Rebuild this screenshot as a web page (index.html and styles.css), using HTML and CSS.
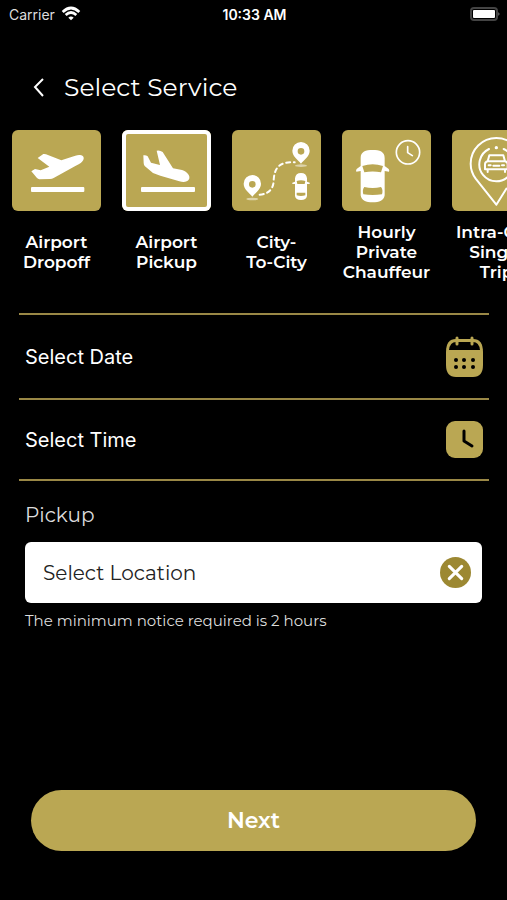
FILE: index.html
```html
<!doctype html>
<html lang="en">
  <head>
    <meta charset="utf-8">
    <meta name="viewport" content="width=device-width, initial-scale=1">
    <title>Select Service</title>
    <link rel="stylesheet" href="styles.css">
  </head>
  <body>
    <div class="status-bar">
      <div class="carrier">
        <span>Carrier</span>
        <svg width="20" height="16" viewBox="0 0 60 48" fill="none" stroke="#fff" stroke-width="8">
          <path d="M5 18Q30-6 55 18M14 27Q30 12 46 27" />
          <path d="M22 35Q30 28 38 35L30 43Z" fill="#fff" stroke="none" />
        </svg>
      </div>
      <time>10:33 AM</time>
      <div class="battery">
        <svg width="30" height="14" viewBox="0 0 30 14">
          <rect x="1" y="1" width="26" height="12" rx="3" fill="none" stroke="#444" stroke-width="2" />
          <rect x="3" y="3" width="22" height="8" rx="1" fill="#fff" />
          <path d="M28 5l2 2-2 2z" fill="#555" />
        </svg>
      </div>
    </div>

    <header class="title-bar">
      <button type="button" class="back" aria-label="Back">
        <svg width="12" height="20" viewBox="0 0 12 20" fill="none" stroke="#fff" stroke-width="2">
          <path d="M11 2L3 10l8 9" />
        </svg>
      </button>
      <h1>Select Service</h1>
    </header>

    <main>
      <div class="services">
        <button type="button" class="service">
          <svg class="tile" viewBox="0 0 267 243" fill="#fff">
            <path d="M58 124L69 117 86 121 112 110 77 84 94 72Q98 71 102 73L148 91 190 77C205 72 217 77 215 86C213 96 202 102 190 108L125 144Q120 147 114 147L82 148Q78 147 75 144Z" />
            <rect x="57" y="171" width="160" height="15" rx="3" />
          </svg>
          <span class="service-name">Airport<br>Dropoff</span>
        </button>
        <button type="button" class="service selected" aria-pressed="true">
          <svg class="tile" viewBox="0 0 267 243" fill="#fff">
            <path d="M64 76Q71 74 77 79L87 98 114 105 104 62Q114 60 122 66L153 115 180 120C197 125 206 139 201 148C196 157 183 157 172 154L115 137 93 129 68 108Q65 104 65 99Z" />
            <rect x="57" y="171" width="162" height="15" rx="3" />
          </svg>
          <span class="service-name">Airport<br>Pickup</span>
        </button>
        <button type="button" class="service">
          <svg class="tile" viewBox="0 0 267 243" fill="#fff">
            <ellipse cx="61" cy="207" rx="18" ry="4" opacity=".5" />
            <ellipse cx="207" cy="107" rx="18" ry="4" opacity=".5" />
            <path fill-rule="evenodd" d="M61 200C53 189 35 178 35 161a26 26 0 0 1 52 0C87 178 69 189 61 200ZM61 153a10 10 0 1 0 0 20a10 10 0 1 0 0-20Z" />
            <path fill-rule="evenodd" d="M207 101C199 90 181 79 181 62a26 26 0 0 1 52 0C233 79 215 90 207 101ZM207 54a10 10 0 1 0 0 20a10 10 0 1 0 0-20Z" />
            <path d="M83 194C112 192 125 174 125 151C127 120 136 94 188 97" fill="none" stroke="#fff" stroke-width="6" stroke-linecap="round" stroke-dasharray="12 11" />
            <path fill-rule="evenodd" d="M189 145Q191 129 207 129Q223 129 225 145V155L233 158V162H225V198Q223 210 207 210Q191 210 189 198V162H181V158L189 155ZM194 153Q207 148 220 153L218 162H196ZM194 188V196Q207 200 220 196V188Z" />
          </svg>
          <span class="service-name">City-<br>To-City</span>
        </button>
        <button type="button" class="service">
          <svg class="tile" viewBox="0 0 267 243" fill="#fff">
            <path fill-rule="evenodd" d="M56 84C56 65 71 60 92 60C113 60 128 65 128 84V108L140 117Q143 121 141 125L128 123V196C126 212 112 217 92 217C72 217 58 212 56 196V123L43 125Q41 120 44 117L56 108ZM61 108L67 127Q92 122 117 127L123 108Q92 97 61 108ZM67 171Q60 180 64 193Q92 197 120 193Q124 180 117 171Q92 177 67 171Z" />
            <g fill="none" stroke="#fff" stroke-width="5" stroke-linecap="round">
              <circle cx="198" cy="67" r="35" />
              <path d="M197 50V68L211 77" />
            </g>
          </svg>
          <span class="service-name">Hourly<br>Private<br>Chauffeur</span>
        </button>
        <button type="button" class="service">
          <svg class="tile" viewBox="0 0 267 243" fill="none" stroke="#fff" stroke-width="6" stroke-linecap="round" stroke-linejoin="round">
            <path d="M163 176L133 224 71 146C61 132 56 118 56 101a77 77 0 0 1 154 0C210 123 200 139 181 158" />
            <path d="M111 57a51 51 0 1 0 44 0" />
            <circle cx="133" cy="53" r="5" fill="#fff" stroke="none" />
            <path d="M107 94L112 76H154L159 94ZM107 94Q99 96 99 103V118H167V103Q167 96 159 94M107 120V126M159 120V126M110 106H116M150 106H156M124 107H142" />
          </svg>
          <span class="service-name">Intra-City<br>Single<br>Trip</span>
        </button>
      </div>

      <div class="schedule">
        <button type="button" class="schedule-row date">
          <span>Select Date</span>
          <svg width="37" height="41" viewBox="0 0 37 41">
            <path d="M0 16Q0 3 10 3H27Q37 3 37 16V29Q37 41 27 41H10Q0 41 0 29Z" fill="#baa753" />
            <path d="M3 14Q4 6 10 6H27Q33 6 34 14Z" fill="#000" />
            <path d="M11 2V8M26 2V8" stroke="#baa753" stroke-width="3" stroke-linecap="round" />
            <g fill="#000">
              <circle cx="10" cy="24" r="2" /><circle cx="18" cy="24" r="2" /><circle cx="27" cy="24" r="2" />
              <circle cx="10" cy="31" r="2" /><circle cx="18" cy="31" r="2" /><circle cx="27" cy="31" r="2" />
            </g>
          </svg>
        </button>
        <button type="button" class="schedule-row time">
          <span>Select Time</span>
          <svg width="37" height="37" viewBox="0 0 37 37">
            <rect width="37" height="37" rx="9" fill="#baa753" />
            <path d="M18 10V20L26 25" fill="none" stroke="#000" stroke-width="3" stroke-linecap="round" stroke-linejoin="round" />
          </svg>
        </button>
      </div>

      <div class="pickup">
        <label for="location">Pickup</label>
        <div class="location-box">
          <input type="text" id="location" placeholder="Select Location">
          <button type="button" class="clear" aria-label="Clear location">
            <svg width="31" height="31" viewBox="0 0 30 30">
              <circle cx="15" cy="15" r="15" fill="#9c8832" />
              <path d="M9 9L21 21M21 9L9 21" stroke="#fff" stroke-width="3" stroke-linecap="round" />
            </svg>
          </button>
        </div>
        <p class="notice">The minimum notice required is 2 hours</p>
      </div>
    </main>

    <button type="button" class="next">Next</button>
  </body>
</html>
```

FILE: styles.css
```css
* {
  box-sizing: border-box;
}

body {
  display: flex;
  flex-direction: column;
  min-height: 100vh;
  margin: 0;
  background-color: #000;
  color: #fff;
  font-family: Montserrat, Inter, "Liberation Sans", sans-serif;
}

button {
  padding: 0;
  border: 0;
  background: none;
  color: inherit;
  font: inherit;
  cursor: pointer;
}

svg {
  display: block;
  flex: none;
}

/* Status bar */
.status-bar {
  display: grid;
  grid-template-columns: 1fr auto 1fr;
  align-items: center;
  height: 28px;
  padding: 0 7px 0 9px;
  font-family: Inter, "Liberation Sans", sans-serif;
  font-size: 14px;
}

.status-bar time {
  font-weight: 600;
}

.carrier {
  display: flex;
  align-items: center;
  gap: 6px;
  color: #ddd;
}

.battery {
  justify-self: end;
}

/* Title */
.title-bar {
  display: flex;
  align-items: center;
  gap: 20px;
  margin-top: 39px;
  padding: 0 32px;
}

.title-bar h1 {
  margin: 0;
  font-size: 25px;
  font-weight: 400;
  line-height: 40px;
}

/* Services */
.services {
  display: flex;
  gap: 21px;
  margin-top: 23px;
  padding: 0 12px;
  overflow-x: auto;
  scrollbar-width: none;
}

.service {
  display: flex;
  flex: none;
  flex-direction: column;
  gap: 11px;
  width: 89px;
}

.tile {
  width: 89px;
  height: 81px;
  border-radius: 6px;
  background-color: #baa753;
}

.selected .tile {
  box-shadow: inset 0 0 0 4px #fff;
}

.service-name {
  display: flex;
  flex: 1;
  align-items: center;
  justify-content: center;
  align-self: center;
  font-size: 17px;
  font-weight: 600;
  line-height: 20px;
  white-space: nowrap;
}

/* Date and time */
.schedule {
  margin: 31px 18px 0 19px;
  border-top: 2px solid #9a8846;
}

.schedule-row {
  display: flex;
  align-items: center;
  justify-content: space-between;
  width: 100%;
  padding: 0 6px;
  border-bottom: 2px solid #9a8846;
  font-family: Inter, "Liberation Sans", sans-serif;
  font-size: 20px;
}

.date {
  height: 85px;
}

.time {
  height: 81px;
}

/* Pickup */
.pickup {
  margin: 20px 25px 0;
}

.pickup label {
  display: block;
  color: #ddd;
  font-size: 20px;
  line-height: 28px;
}

.location-box {
  display: flex;
  align-items: center;
  height: 61px;
  margin-top: 13px;
  padding: 0 11px 0 18px;
  border-radius: 6px;
  background-color: #fff;
}

.location-box input {
  flex: 1;
  min-width: 0;
  padding: 0;
  border: 0;
  outline: 0;
  background: none;
  color: #222;
  font: inherit;
  font-size: 20px;
}

.location-box input::placeholder {
  color: #222;
  opacity: 1;
}

.notice {
  margin: 8px 0 0;
  color: #ddd;
  font-size: 15px;
  line-height: 20px;
}

.next {
  height: 61px;
  margin: auto 31px 49px;
  border-radius: 31px;
  background-color: #baa753;
  font-size: 22px;
  font-weight: 600;
}
```
